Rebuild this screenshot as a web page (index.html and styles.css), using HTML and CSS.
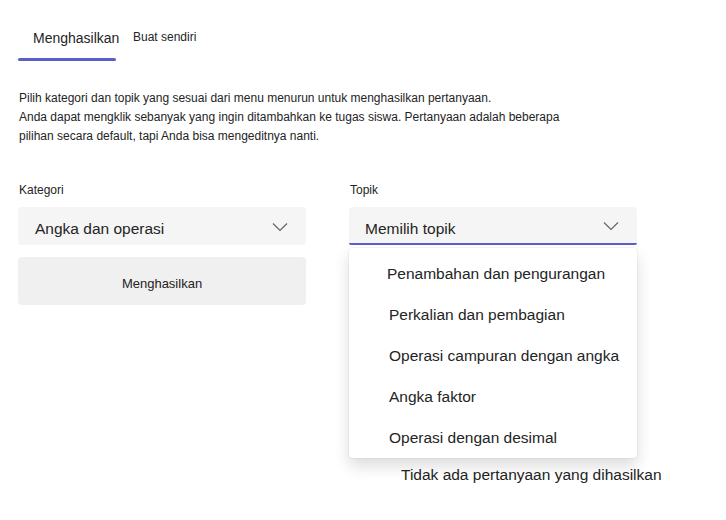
FILE: index.html
```html
<!DOCTYPE html>
<html lang="id">
<head>
<meta charset="utf-8">
<title>Menghasilkan</title>
<link rel="stylesheet" href="styles.css">
</head>
<body>
<div class="page">
  <nav class="tabs">
    <div class="tab tab-active">Menghasilkan</div>
    <div class="tab tab-second">Buat sendiri</div>
  </nav>
  <p class="intro">Pilih kategori dan topik yang sesuai dari menu menurun untuk menghasilkan pertanyaan.<br>Anda dapat mengklik sebanyak yang ingin ditambahkan ke tugas siswa. Pertanyaan adalah beberapa<br>pilihan secara default, tapi Anda bisa mengeditnya nanti.</p>
  <div class="form">
    <div class="col col-left">
      <div class="label">Kategori</div>
      <div class="select">
        <span class="select-text">Angka dan operasi</span>
        <svg class="chev" width="16" height="10" viewBox="0 0 16 10"><path d="M1 1.5l7 7 7-7" fill="none" stroke="#616161" stroke-width="1.1"/></svg>
      </div>
      <div class="button">Menghasilkan</div>
    </div>
    <div class="col col-right">
      <div class="label">Topik</div>
      <div class="select-wrap">
        <div class="select select-open">
          <span class="select-text">Memilih topik</span>
          <svg class="chev" width="16" height="10" viewBox="0 0 16 10"><path d="M1 1.5l7 7 7-7" fill="none" stroke="#616161" stroke-width="1.1"/></svg>
        </div>
        <ul class="menu">
          <li class="item item-first">Penambahan dan pengurangan</li>
          <li class="item">Perkalian dan pembagian</li>
          <li class="item">Operasi campuran dengan angka</li>
          <li class="item">Angka faktor</li>
          <li class="item">Operasi dengan desimal</li>
        </ul>
      </div>
      <div class="empty">Tidak ada pertanyaan yang dihasilkan</div>
    </div>
  </div>
</div>
</body>
</html>
```
FILE: styles.css
```css
* { box-sizing: border-box; }
html, body { margin: 0; padding: 0; background: #ffffff; }
body {
  font-family: "Liberation Sans", Arial, sans-serif;
  color: #242424;
  width: 726px;
  height: 520px;
  overflow: hidden;
}
.page { padding: 28px 0 0 18px; }
.tabs { display: flex; align-items: flex-start; }
.tab { white-space: nowrap; }
.tab-active {
  width: 98px;
  padding-left: 15px;
  font-size: 14px;
  line-height: 20px;
}
.tab-active::after {
  content: "";
  display: block;
  width: 98px;
  margin-left: -15px;
  margin-top: 10px;
  height: 3px;
  border-radius: 2px;
  background: #5b5fc7;
}
.tab-second {
  margin-left: 17px;
  font-size: 12px;
  line-height: 18px;
}
.intro {
  margin: 28px 0 0 1px;
  font-size: 12px;
  line-height: 19px;
  white-space: nowrap;
}
.form { display: flex; margin-top: 36px; }
.col-left { width: 288px; }
.col-right { margin-left: 43px; flex: 1; }
.label {
  font-size: 12px;
  line-height: 16px;
  padding-left: 1px;
  margin-bottom: 9px;
}
.select {
  width: 288px;
  height: 38px;
  background: #f5f5f5;
  border-radius: 4px;
  display: flex;
  align-items: center;
  justify-content: space-between;
  padding: 5px 18px 0 17px;
}
.select-text { font-size: 15.5px; }
.chev { display: block; margin-top: -4px; }
.select-open {
  border-bottom: 2px solid #5b5fc7;
  border-radius: 4px 4px 2px 2px;
  padding-left: 16px;
  padding-top: 7px;
}
.select-open .chev { margin-top: -6px; }
.button {
  margin-top: 12px;
  height: 48px;
  background: #f0f0f0;
  border-radius: 4px;
  display: flex;
  align-items: center;
  justify-content: center;
  padding-top: 4px;
  font-size: 13px;
}
.select-wrap { position: relative; width: 288px; }
.menu {
  position: absolute;
  left: 0;
  top: 41px;
  width: 288px;
  margin: 0;
  padding: 5px 0 0;
  list-style: none;
  background: #ffffff;
  border-radius: 4px;
  box-shadow: 0 8px 16px rgba(0, 0, 0, 0.14), 0 0 2px rgba(0, 0, 0, 0.12);
  z-index: 2;
}
.item {
  height: 41px;
  line-height: 41px;
  padding-left: 40px;
  font-size: 15.5px;
  white-space: nowrap;
}
.item-first { padding-left: 38px; }
.empty {
  margin-top: 220px;
  padding-left: 52px;
  font-size: 15.5px;
  line-height: 20px;
  white-space: nowrap;
}
```
